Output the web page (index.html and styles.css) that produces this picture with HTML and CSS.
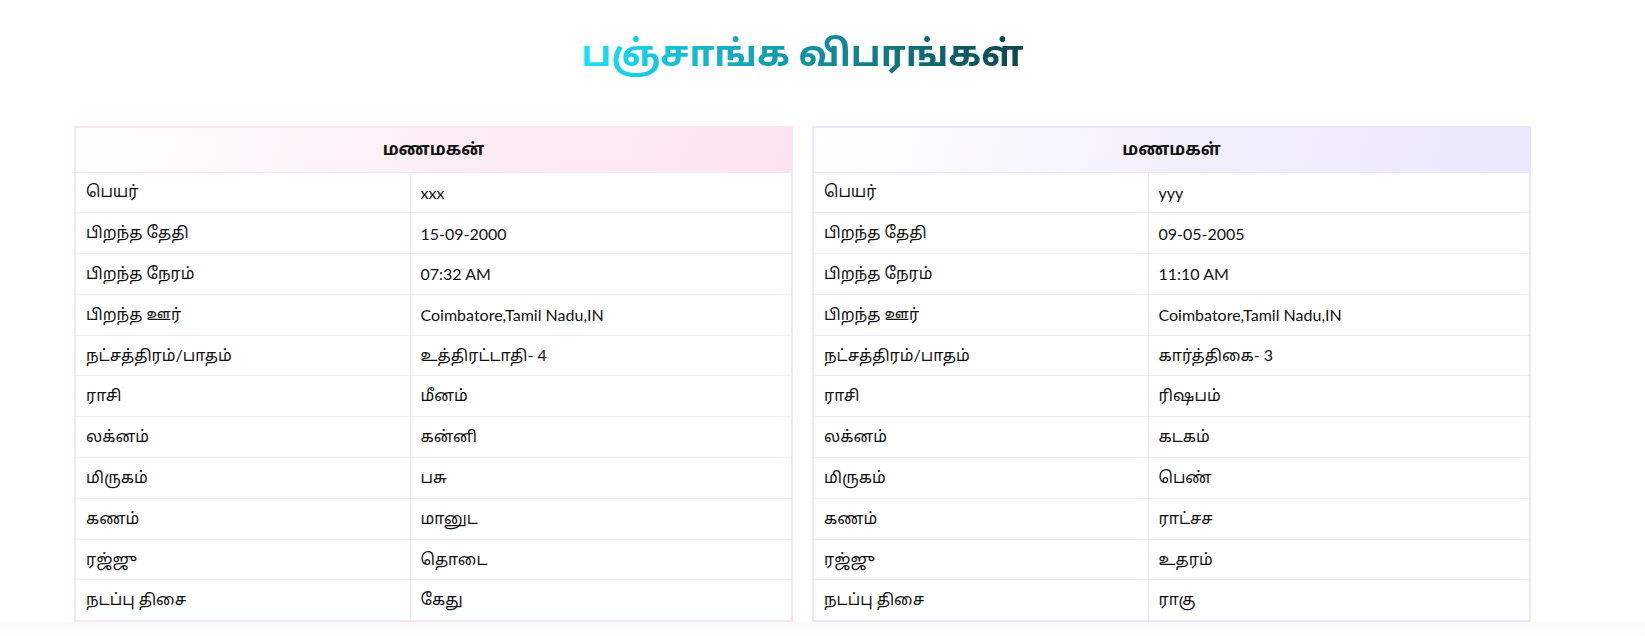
FILE: index.html
```html
<!DOCTYPE html>
<html lang="ta">
<head>
<meta charset="utf-8">
<title>பஞ்சாங்க விபரங்கள்</title>
<link rel="stylesheet" href="styles.css">
</head>
<body>
<main class="page">
  <h1 class="title">பஞ்சாங்க விபரங்கள்</h1>
  <div class="tables">
    <table class="card groom">
      <colgroup><col class="label-col"><col></colgroup>
      <thead><tr><th colspan="2">மணமகன்</th></tr></thead>
      <tbody>
        <tr><td>பெயர்</td><td>xxx</td></tr>
        <tr><td>பிறந்த தேதி</td><td>15-09-2000</td></tr>
        <tr><td>பிறந்த நேரம்</td><td>07:32 AM</td></tr>
        <tr><td>பிறந்த ஊர்</td><td>Coimbatore,Tamil Nadu,IN</td></tr>
        <tr><td>நட்சத்திரம்/பாதம்</td><td>உத்திரட்டாதி- 4</td></tr>
        <tr><td>ராசி</td><td>மீனம்</td></tr>
        <tr><td>லக்னம்</td><td>கன்னி</td></tr>
        <tr><td>மிருகம்</td><td>பசு</td></tr>
        <tr><td>கணம்</td><td>மானுட</td></tr>
        <tr><td>ரஜ்ஜு</td><td>தொடை</td></tr>
        <tr><td>நடப்பு திசை</td><td>கேது</td></tr>
      </tbody>
    </table>
    <table class="card bride">
      <colgroup><col class="label-col"><col></colgroup>
      <thead><tr><th colspan="2">மணமகள்</th></tr></thead>
      <tbody>
        <tr><td>பெயர்</td><td>yyy</td></tr>
        <tr><td>பிறந்த தேதி</td><td>09-05-2005</td></tr>
        <tr><td>பிறந்த நேரம்</td><td>11:10 AM</td></tr>
        <tr><td>பிறந்த ஊர்</td><td>Coimbatore,Tamil Nadu,IN</td></tr>
        <tr><td>நட்சத்திரம்/பாதம்</td><td>கார்த்திகை- 3</td></tr>
        <tr><td>ராசி</td><td>ரிஷபம்</td></tr>
        <tr><td>லக்னம்</td><td>கடகம்</td></tr>
        <tr><td>மிருகம்</td><td>பெண்</td></tr>
        <tr><td>கணம்</td><td>ராட்சச</td></tr>
        <tr><td>ரஜ்ஜு</td><td>உதரம்</td></tr>
        <tr><td>நடப்பு திசை</td><td>ராகு</td></tr>
      </tbody>
    </table>
  </div>
  <div class="shade"></div>
</main>
</body>
</html>
```
FILE: styles.css
```css
* { box-sizing: border-box; }
html, body { margin: 0; background: #fff; }
body {
  font-family: Lato, "Noto Sans Tamil", "Lohit Tamil", "Noto Sans", "Liberation Sans", sans-serif;
  color: #111;
}
.page {
  padding: 0 114px 0 74px;
}
.title {
  margin: 0 auto;
  padding-top: 28px;
  height: 126px;
  width: max-content;
  text-align: center;
  font-size: 36px;
  font-weight: 700;
  line-height: 48px;
  background: linear-gradient(90deg, #15e3fb 0%, #13b3c8 30%, #0f7f89 65%, #0c4448 100%);
  -webkit-background-clip: text;
  background-clip: text;
  color: transparent;
}
.tables {
  display: grid;
  grid-template-columns: 1fr 1fr;
  gap: 19px;
}
.card {
  width: 100%;
  border-collapse: collapse;
  table-layout: fixed;
  font-size: 16px;
}
.label-col { width: 335px; }
.card th {
  height: 45px;
  font-weight: 700;
  font-size: 17px;
  text-align: center;
}
.card td {
  height: 40.8px;
  padding: 0 10px;
  vertical-align: middle;
}
.groom { border: 2px solid #fce4ef; }
.groom th { background: linear-gradient(110deg, #ffffff 0%, #fdeef5 50%, #fce4ef 100%); border-bottom: 1px solid #fce4ef; }
.groom td { border: 1px solid #fce8f1; }
.bride { border: 2px solid #ebe7fb; }
.bride th { background: linear-gradient(110deg, #ffffff 0%, #f3f0fd 50%, #ebe7fc 100%); border-bottom: 1px solid #ebe7fb; }
.bride td { border: 1px solid #eeebfb; }
.shade {
  height: 14px;
  margin: 0 -114px 0 -74px;
  background: linear-gradient(180deg, #fafafa, #fcfcfc);
}
```
